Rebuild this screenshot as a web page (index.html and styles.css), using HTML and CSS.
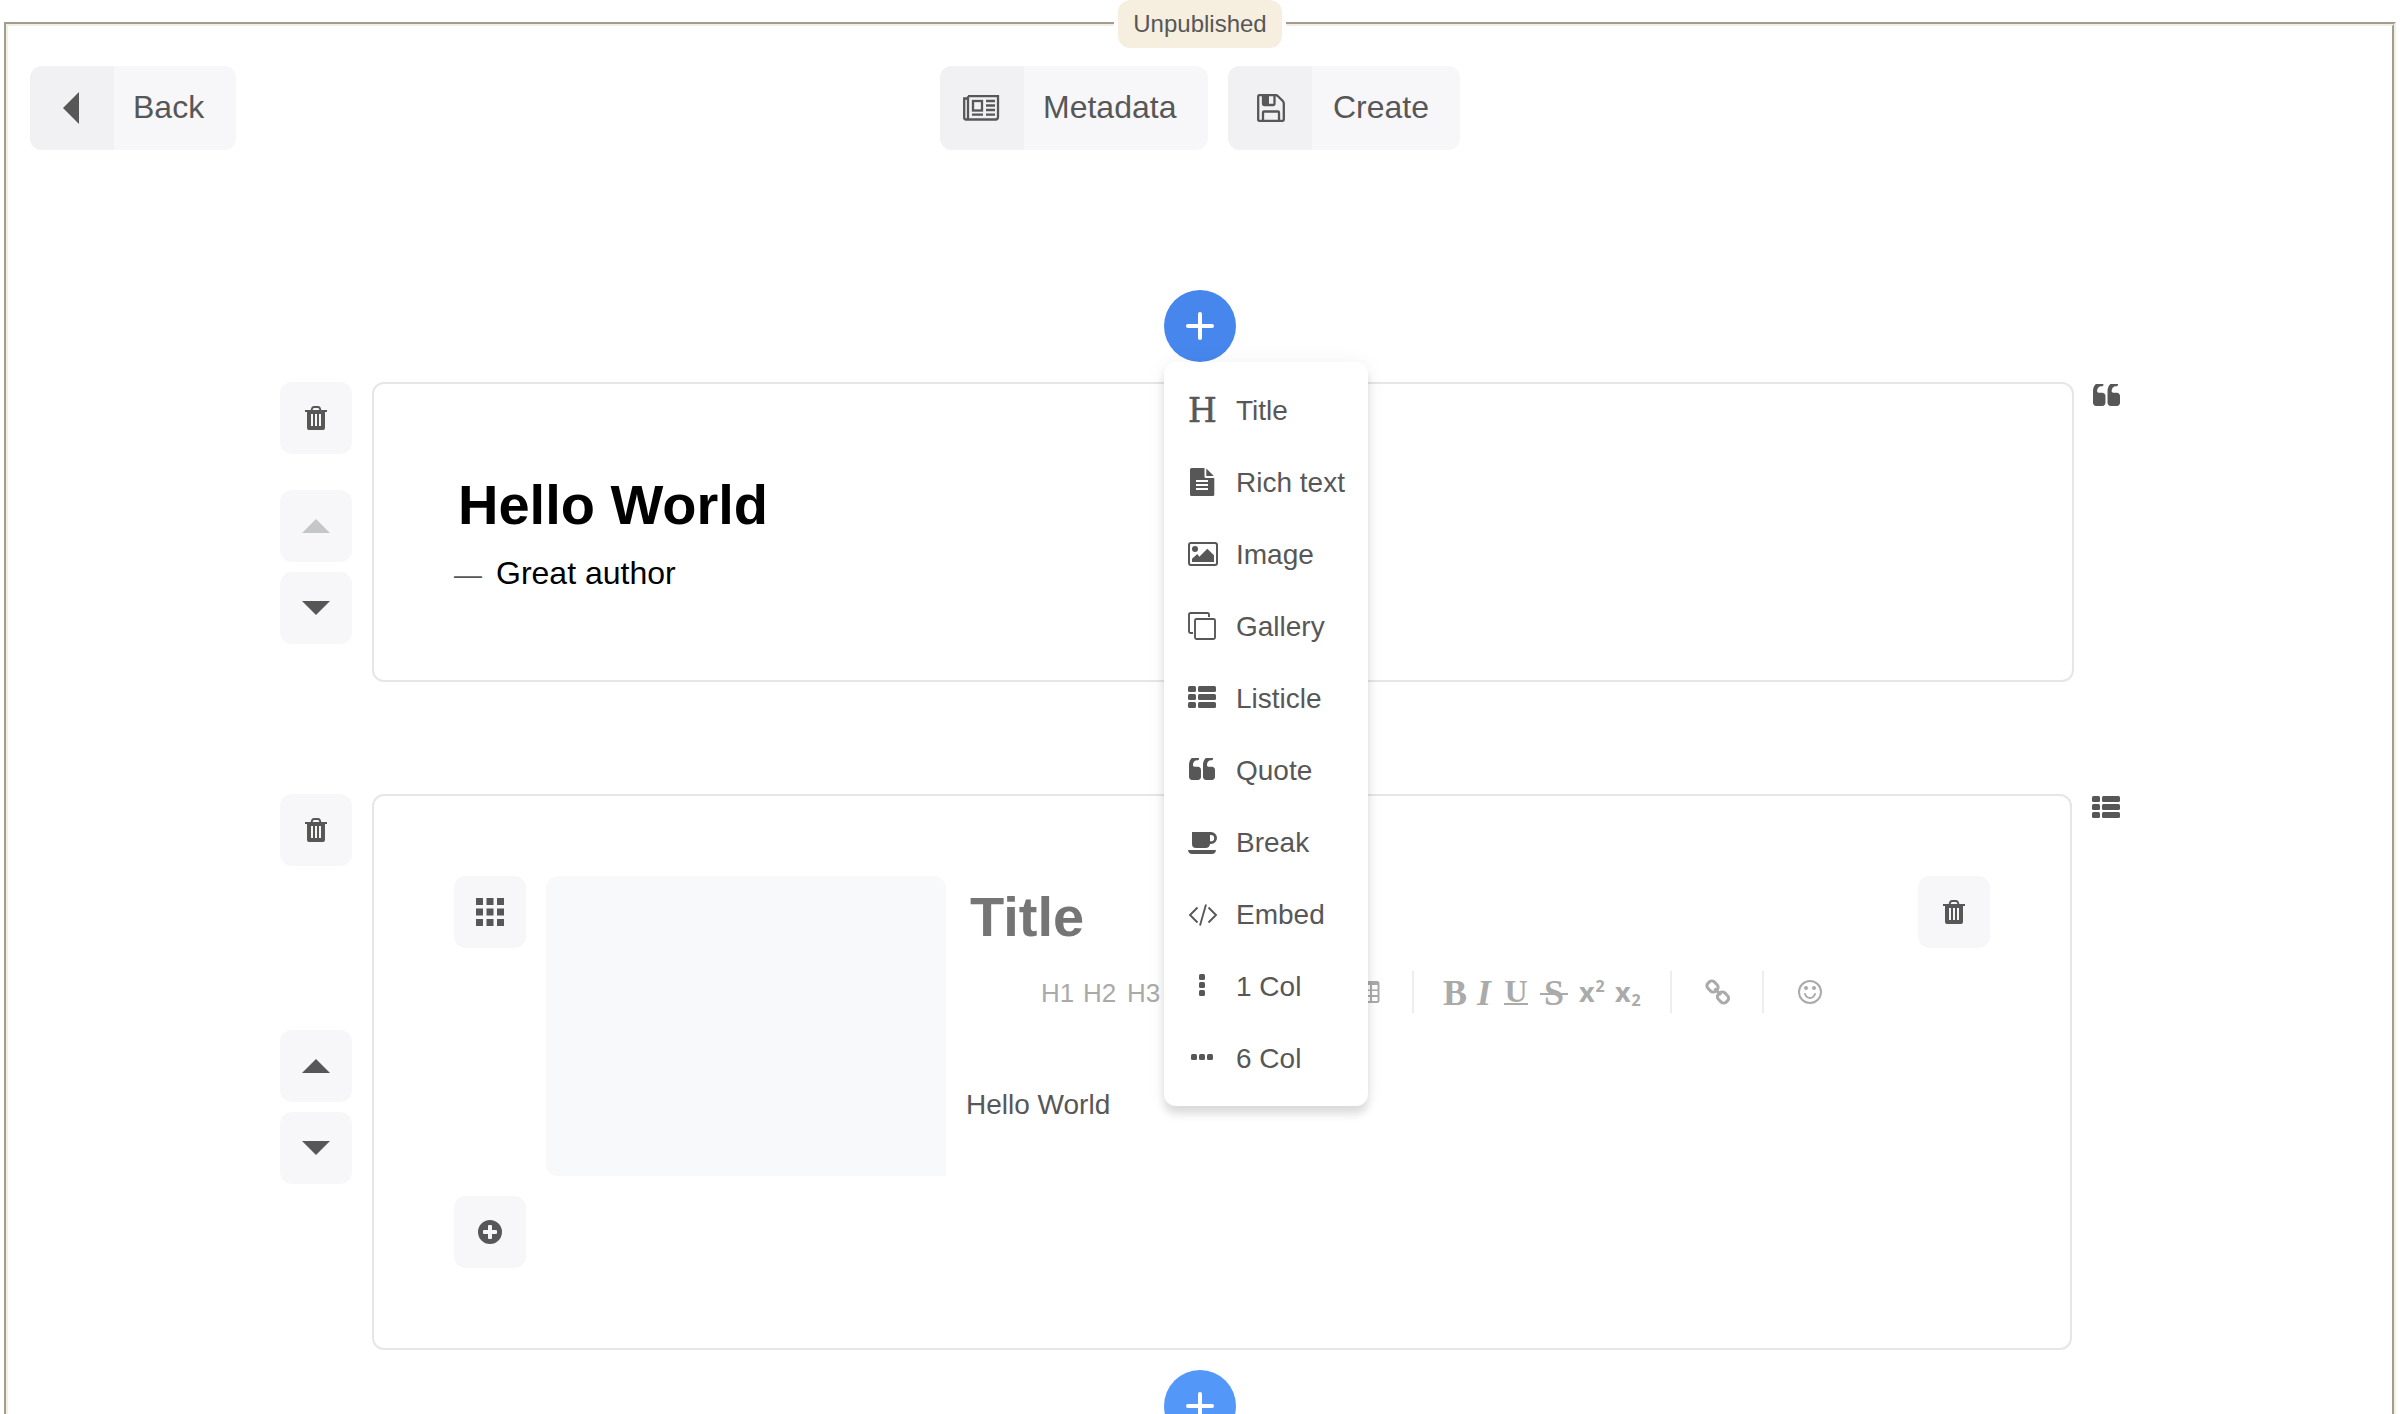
FILE: index.html
```html
<!DOCTYPE html>
<html lang="en">
<head>
<meta charset="utf-8">
<title>Article editor</title>
<link rel="stylesheet" href="styles.css">
</head>
<body>
<svg class="defs" width="0" height="0">
  <symbol id="trash" viewBox="0 0 22 24"><path d="M0 4H22V6H20V22Q20 24 18 24H4Q2 24 2 22V6H0ZM6 8V20H8V8ZM10 8V20H12V8ZM14 8V20H16V8Z" fill="currentColor" fill-rule="evenodd"/><path d="M6.500 4.500Q7 1 9 1H13Q15 1 15.500 4.500" fill="none" stroke="currentColor" stroke-width="1.800"/></symbol>
  <symbol id="up" viewBox="0 0 28 14"><path d="M0 14L14 0L28 14Z" fill="currentColor"/></symbol>
  <symbol id="down" viewBox="0 0 28 14"><path d="M0 0L14 14L28 0Z" fill="currentColor"/></symbol>
  <symbol id="quote" viewBox="64 256 1664 1280" preserveAspectRatio="none"><path fill="currentColor" d="M832 960v384q0 80-56 136t-136 56h-384q-80 0-136-56t-56-136v-704q0-104 40.500-198.500t109.500-163.500 163.500-109.500 198.500-40.500h64q26 0 45 19t19 45v128q0 26-19 45t-45 19h-64q-106 0-181 75t-75 181v32q0 40 28 68t68 28h224q80 0 136 56t56 136zm896 0v384q0 80-56 136t-136 56h-384q-80 0-136-56t-56-136v-704q0-104 40.500-198.500t109.500-163.500 163.500-109.500 198.500-40.500h64q26 0 45 19t19 45v128q0 26-19 45t-45 19h-64q-106 0-181 75t-75 181v32q0 40 28 68t68 28h224q80 0 136 56t56 136z"/></symbol>
  <symbol id="list" viewBox="0 0 28 22"><g fill="currentColor"><rect width="8" height="6" rx="1.500"/><rect x="10" width="18" height="6" rx="1.500"/><rect y="8" width="8" height="6" rx="1.500"/><rect x="10" y="8" width="18" height="6" rx="1.500"/><rect y="16" width="8" height="6" rx="1.500"/><rect x="10" y="16" width="18" height="6" rx="1.500"/></g></symbol>
  <symbol id="plus" viewBox="0 0 28 28"><path d="M14 2V26M2 14H26" stroke="currentColor" stroke-width="4" stroke-linecap="round"/></symbol>
</svg>

<div class="frame">
  <span class="badge">Unpublished</span>

  <header class="topbar">
    <button class="btn btn-back"><span class="btn-icon"><svg width="18" height="32"><path d="M0 16L16 0V32Z" fill="currentColor"/></svg></span><span class="btn-label">Back</span></button>
    <div class="actions">
      <button class="btn btn-meta"><span class="btn-icon"><svg width="38" height="26" viewBox="0 0 38 26"><g fill="none" stroke="currentColor" stroke-width="2.300"><path d="M5 1.200H35V22Q35 24.500 32.500 24.500H3Q1.200 24.500 1.200 22.500V3.500H5M5 1.200V22.500Q5 24.500 3 24.500"/><rect x="10" y="6" width="9" height="9.500"/><path d="M23 6H32M23 10.500H32M23 15H32M23 19.700H32M9 19.700H20"/></g></svg></span><span class="btn-label">Metadata</span></button>
      <button class="btn btn-create"><span class="btn-icon"><svg class="disk" width="28" height="28" viewBox="0 0 28 28"><g fill="none" stroke="currentColor" stroke-width="2.300"><path d="M2.200 1.200H18.500Q20 1.200 21 2.200L25.800 7Q26.800 8 26.800 9.500V25.800Q26.800 26.800 25.800 26.800H2.200Q1.200 26.800 1.200 25.800V2.200Q1.200 1.200 2.200 1.200Z"/><path d="M6 26V18.500Q6 17.500 7 17.500H21Q22 17.500 22 18.500V26M17.500 2V9.500Q17.500 11 16 11H7Q6 11 6 10V2"/></g><path d="M5 1H12V11H6Z" fill="currentColor"/></svg></span><span class="btn-label">Create</span></button>
    </div>
  </header>

  <main class="editor">
    <div class="insert insert-open">
      <button class="add add-active"><svg width="28" height="28"><use href="#plus"/></svg></button>
      <ul class="menu">
        <li><span class="heading-icon">H</span>Title</li>
        <li><svg width="30" height="28"><path d="M3.500 0H16.500V8.500Q16.500 10 18 10H26.300V26.500Q26.300 28 24.800 28H3.500Q2 28 2 26.500V1.500Q2 0 3.500 0ZM8 12V14H20V12ZM8 16V18H20V16ZM8 20V22H20V20Z" fill="currentColor" fill-rule="evenodd"/><path d="M18.300 .5L25.800 8H18.300Z" fill="currentColor"/></svg>Rich text</li>
        <li><svg width="30" height="28"><rect x="1" y="3" width="28" height="22" rx="2" fill="none" stroke="currentColor" stroke-width="2"/><circle cx="7" cy="9" r="3" fill="currentColor"/><path d="M4 22V18.700L9.300 14L11.300 16.700L19.300 8.700L26 15.300V22Z" fill="currentColor"/></svg>Image</li>
        <li><svg width="30" height="28"><g fill="none" stroke="currentColor" stroke-width="1.900"><path d="M21 5V2.500Q21 1 19.500 1H2.500Q1 1 1 2.500V19.500Q1 21 2.500 21H5"/><rect x="7" y="7" width="20" height="20" rx="1.500"/></g></svg>Gallery</li>
        <li><svg width="30" height="28"><use href="#list" y="2" width="28" height="22"/></svg>Listicle</li>
        <li><svg width="30" height="28"><use href="#quote" x="1" y="2" width="26" height="22"/></svg>Quote</li>
        <li><svg width="30" height="28"><path d="M4 4H23A6 6 0 0 1 23 16H22Q21.500 20 17.500 20H8Q4 20 4 16ZM22 7V13.300H23A3.150 3.150 0 0 0 23 7ZM0 22H28Q27.500 26 24 26H4Q.5 26 0 22Z" fill="currentColor" fill-rule="evenodd"/></svg>Break</li>
        <li><svg width="30" height="28"><path d="M9.500 7.500L2 15L9.500 22.500M20.500 7.500L28 15L20.500 22.500M18 4.500L12 25.500" fill="none" stroke="currentColor" stroke-width="1.900"/></svg>Embed</li>
        <li><svg width="30" height="28"><g fill="currentColor"><rect x="11" y="2" width="6" height="6" rx="1.500"/><rect x="11" y="10" width="6" height="6" rx="1.500"/><rect x="11" y="18" width="6" height="6" rx="1.500"/></g></svg>1 Col</li>
        <li><svg width="30" height="28"><g fill="currentColor"><rect x="3" y="10" width="6" height="6" rx="1.500"/><rect x="11" y="10" width="6" height="6" rx="1.500"/><rect x="19" y="10" width="6" height="6" rx="1.500"/></g></svg>6 Col</li>
      </ul>
    </div>

    <section class="block block-quote">
      <div class="controls">
        <button class="tool"><svg width="22" height="24"><use href="#trash"/></svg></button>
        <div class="movers">
          <button class="tool tool-disabled"><svg width="28" height="14"><use href="#up"/></svg></button>
          <button class="tool"><svg width="28" height="14"><use href="#down"/></svg></button>
        </div>
      </div>
      <div class="card quote-card">
        <h2 class="quote-text">Hello World</h2>
        <p class="quote-author"><span class="dash">—</span><span>Great author</span></p>
      </div>
      <svg class="kind kind-quote" width="27" height="22"><use href="#quote"/></svg>
    </section>

    <section class="block block-list">
      <div class="controls">
        <button class="tool"><svg width="22" height="24"><use href="#trash"/></svg></button>
        <div class="movers">
          <button class="tool"><svg width="28" height="14"><use href="#up"/></svg></button>
          <button class="tool"><svg width="28" height="14"><use href="#down"/></svg></button>
        </div>
      </div>
      <div class="card list-card">
        <div class="entry">
          <button class="tool"><svg width="28" height="28"><g fill="currentColor"><rect width="7" height="7"/><rect x="10.500" width="7" height="7"/><rect x="21" width="7" height="7"/><rect y="10.500" width="7" height="7"/><rect x="10.500" y="10.500" width="7" height="7"/><rect x="21" y="10.500" width="7" height="7"/><rect y="21" width="7" height="7"/><rect x="10.500" y="21" width="7" height="7"/><rect x="21" y="21" width="7" height="7"/></g></svg></button>
          <div class="picture"></div>
          <div class="entry-body">
            <div class="entry-title">Title</div>
            <div class="toolbar">
              <span class="lvl">H1</span><span class="lvl">H2</span><span class="lvl">H3</span>
              <svg width="25" height="22"><path d="M3 0H22Q24.500 0 24.500 2.500V19.500Q24.500 22 22 22H3Q0 22 0 19.500V2.500Q0 0 3 0ZM2 4V8.500H7V4ZM9 4V8.500H15V4ZM17 4V8.500H22.500V4ZM2 10V14H7V10ZM9 10V14H15V10ZM17 10V14H22.500V10ZM2 16V20H7V16ZM9 16V20H15V16ZM17 16V20H22.500V16Z" fill="currentColor" fill-rule="evenodd"/></svg>
              <i class="rule"></i>
              <span class="fmt">B</span><span class="fmt fmt-i">I</span><span class="fmt fmt-u">U</span><span class="fmt fmt-s">S</span>
              <span class="fmt-x">x<sup>2</sup></span><span class="fmt-x">x<sub>2</sub></span>
              <i class="rule"></i>
              <svg width="26" height="26" viewBox="0 0 26 26"><g fill="none" stroke="currentColor" stroke-width="3"><rect x="-5.500" y="-4.500" width="11" height="9" rx="3.500" transform="translate(7.500 7.500) rotate(45)"/><rect x="-5.500" y="-4.500" width="11" height="9" rx="3.500" transform="translate(18 18.500) rotate(45)"/><path d="M9.500 9.500L16 16"/></g></svg>
              <i class="rule"></i>
              <svg width="24" height="24" viewBox="0 0 24 24"><circle cx="12" cy="12" r="11" fill="none" stroke="currentColor" stroke-width="2"/><circle cx="8" cy="8" r="2" fill="currentColor"/><circle cx="16" cy="8" r="2" fill="currentColor"/><path d="M7 14Q8.500 18 12 18T17 14" fill="none" stroke="currentColor" stroke-width="2" stroke-linecap="round"/></svg>
            </div>
            <p class="entry-text">Hello World</p>
          </div>
          <button class="tool"><svg width="22" height="24"><use href="#trash"/></svg></button>
        </div>
        <button class="tool"><svg width="24" height="24"><path d="M12 0A12 12 0 1 1 12 24A12 12 0 1 1 12 0ZM11 5Q10 5 10 6V10H6Q5 10 5 11V13Q5 14 6 14H10V18Q10 19 11 19H13Q14 19 14 18V14H18Q19 14 19 13V11Q19 10 18 10H14V6Q14 5 13 5Z" fill="currentColor" fill-rule="evenodd"/></svg></button>
      </div>
      <svg class="kind" width="28" height="22"><use href="#list"/></svg>
    </section>

    <div class="insert">
      <button class="add"><svg width="28" height="28"><use href="#plus"/></svg></button>
    </div>
  </main>
</div>
</body>
</html>
```

FILE: styles.css
```css
* { box-sizing: border-box; }

body {
  margin: 0;
  height: 1414px;
  overflow: hidden;
  background: #fff;
  color: #575757;
  font-family: "Liberation Sans", Arial, sans-serif;
  font-size: 28px;
}

svg { display: block; flex: none; }
.defs { position: absolute; }

button {
  display: flex;
  align-items: center;
  justify-content: center;
  margin: 0;
  padding: 0;
  border: 0;
  color: inherit;
  font: inherit;
}

h2, p, ul { margin: 0; padding: 0; }

.frame {
  position: relative;
  height: 1392px;
  margin: 22px 4px 0;
  border: 4px groove #f6eedf;
  border-bottom: 0;
}

/* Status badge laid over the frame's top edge */
.badge {
  position: absolute;
  top: -30px;
  left: 50%;
  width: 172px;
  height: 56px;
  border: 4px solid #fff;
  border-radius: 16px;
  background: #f6eedf;
  background-clip: padding-box;
  font-size: 24px;
  line-height: 47px;
  text-align: center;
  transform: translateX(-50%);
}

/* Top bar */
.topbar {
  display: grid;
  grid-template-columns: 1fr auto 1fr;
  padding: 40px 22px 0;
}
.actions { display: flex; gap: 20px; }

.btn {
  height: 84px;
  overflow: hidden;
  justify-content: flex-start;
  border-radius: 12px;
  background: #f7f7fa;
  font-size: 32px;
}
.btn-back { width: 206px; }
.btn-meta { width: 268px; }
.btn-create { width: 232px; }
.btn-icon {
  display: flex;
  align-items: center;
  justify-content: center;
  width: 84px;
  height: 84px;
  background: #f1f1f4;
}
.disk { margin-left: 2px; }
.btn-label { padding: 0 0 2px 19px; }
.btn-create .btn-label { padding-left: 21px; }

/* Block list */
.editor { padding-top: 140px; }

.insert {
  position: relative;
  display: flex;
  justify-content: center;
}
.add {
  width: 72px;
  height: 72px;
  border-radius: 50%;
  background: #5397f9;
  color: #fff;
}
.add-active { background: #4787ed; }

.menu {
  position: absolute;
  z-index: 2;
  top: 72px;
  left: 50%;
  width: 204px;
  margin-left: -36px;
  padding: 12px 0;
  list-style: none;
  border-radius: 12px;
  background: #fff;
  box-shadow: 0 0 20px rgba(0, 0, 0, .06), 0 8px 8px rgba(0, 0, 0, .12);
}
.menu li {
  display: flex;
  align-items: flex-start;
  gap: 18px;
  height: 72px;
  padding-left: 24px;
  line-height: 74px;
  white-space: nowrap;
}
.menu svg { margin-top: 22px; }
.heading-icon {
  width: 30px;
  font-family: "DejaVu Serif", serif;
  font-size: 33px;
  -webkit-text-stroke: .6px currentColor;
}

.block {
  display: flex;
  align-items: flex-start;
  margin-top: 20px;
  padding-left: 272px;
}
.block-list { margin-top: 112px; margin-bottom: 20px; }

.controls { margin-right: 20px; }
.movers { display: grid; gap: 10px; }
.block-quote .movers { margin-top: 36px; }
.block-list .movers { margin-top: 164px; }

.tool {
  flex: none;
  width: 72px;
  height: 72px;
  border-radius: 12px;
  background: #f7f7fa;
}
.tool-disabled { color: #c5c6c8; }

.card {
  border: 2px solid #e5e5ea;
  border-radius: 12px;
}
.kind { margin: 2px 0 0 20px; }
.kind-quote { margin-left: 19px; }

.quote-card { width: 1702px; height: 300px; padding: 89px 0 0 84px; }
.quote-text { color: #000; font-size: 56px; line-height: 64px; }
.quote-author {
  display: flex;
  gap: 14px;
  margin: 16px 0 0 -4px;
  color: #000;
  font-size: 32px;
  line-height: 40px;
}
.dash { padding-top: 2px; color: #575757; font-size: 28px; }

.list-card { width: 1700px; height: 556px; padding: 80px; }
.entry { display: flex; align-items: flex-start; margin-bottom: 20px; }
.picture {
  width: 400px;
  height: 300px;
  margin: 0 20px;
  border-radius: 12px 12px 0 12px;
  background: #f7f9fb;
}
.entry-body { flex: 1; }
.entry-title {
  padding: 9px 0 0 4px;
  color: #757575;
  font-size: 56px;
  font-weight: bold;
  line-height: 64px;
}

.toolbar {
  display: grid;
  grid-template-columns: 42px 44px 228px 57px 31px 34px 27px 36px 39px 36px 55px 35px 57px 36px 24px;
  align-items: center;
  height: 42px;
  margin-top: 21px;
  padding-left: 75px;
  color: #aaa;
  font-size: 26px;
}
.lvl { padding-top: 2px; }
.rule { width: 2px; height: 42px; background: #eee; }
.fmt {
  height: 42px;
  font-family: "Liberation Serif", serif;
  font-size: 36px;
  font-weight: bold;
  line-height: 44px;
}
.fmt-i { font-style: italic; }
.fmt-u {
  width: 24px;
  height: 34px;
  margin-top: -8px;
  border-bottom: 2px solid;
  font-size: 32px;
  line-height: 41px;
  text-align: center;
}
.fmt-s {
  width: 28px;
  background: linear-gradient(currentColor, currentColor) 0 22px / 28px 2px no-repeat;
  text-align: center;
}
.fmt-x {
  font: bold 27px/44px "Open Sans", sans-serif;
  white-space: nowrap;
}
.fmt-x sup, .fmt-x sub { margin-left: 1px; font-size: 16px; line-height: 0; }
.fmt-x sub { vertical-align: -4px; }

.entry-text { margin-top: 77px; line-height: 32px; }
```
